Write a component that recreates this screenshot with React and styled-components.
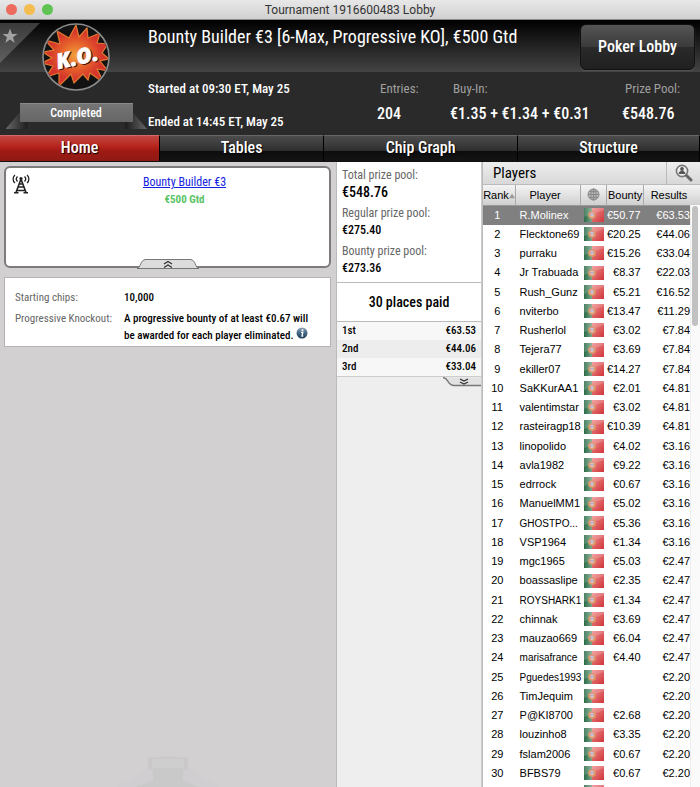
import React from "react";
import styled, { createGlobalStyle } from "styled-components";

const tabs = [
  { label: "Home", size: 160, active: true },
  { label: "Tables", size: 164 },
  { label: "Chip Graph", size: 194 },
  { label: "Structure", size: 182 },
];

const pools = [
  { label: "Total prize pool:", value: "€548.76", big: true },
  { label: "Regular prize pool:", value: "€275.40" },
  { label: "Bounty prize pool:", value: "€273.36" },
];

const payouts = [
  ["1st", "€63.53"],
  ["2nd", "€44.06"],
  ["3rd", "€33.04"],
];

// name, bounty, result
const players = [
  ["R.Molinex", "€50.77", "€63.53"],
  ["Flecktone69", "€20.25", "€44.06"],
  ["purraku", "€15.26", "€33.04"],
  ["Jr Trabuada", "€8.37", "€22.03"],
  ["Rush_Gunz", "€5.21", "€16.52"],
  ["nviterbo", "€13.47", "€11.29"],
  ["Rusherlol", "€3.02", "€7.84"],
  ["Tejera77", "€3.69", "€7.84"],
  ["ekiller07", "€14.27", "€7.84"],
  ["SaKKurAA1", "€2.01", "€4.81"],
  ["valentimstar", "€3.02", "€4.81"],
  ["rasteiragp18", "€10.39", "€4.81"],
  ["linopolido", "€4.02", "€3.16"],
  ["avla1982", "€9.22", "€3.16"],
  ["edrrock", "€0.67", "€3.16"],
  ["ManuelMM1", "€5.02", "€3.16"],
  ["GHOSTPO...", "€5.36", "€3.16"],
  ["VSP1964", "€1.34", "€3.16"],
  ["mgc1965", "€5.03", "€2.47"],
  ["boassaslipe", "€2.35", "€2.47"],
  ["ROYSHARK1", "€1.34", "€2.47"],
  ["chinnak", "€3.69", "€2.47"],
  ["mauzao669", "€6.04", "€2.47"],
  ["marisafrance", "€4.40", "€2.47"],
  ["Pguedes1993", "", "€2.20"],
  ["TimJequim", "", "€2.20"],
  ["P@KI8700", "€2.68", "€2.20"],
  ["louzinho8", "€3.35", "€2.20"],
  ["fslam2006", "€0.67", "€2.20"],
  ["BFBS79", "€0.67", "€2.20"],
];

const wideNames = ["GHOSTPO...", "ROYSHARK1", "marisafrance", "Pguedes1993"];

const KoLogo = () => (
  <svg width="68" height="68" viewBox="0 0 68 68">
    <defs>
      <radialGradient id="blast">
        <stop offset="0" stopColor="#f3a13c" />
        <stop offset="0.45" stopColor="#e5602b" />
        <stop offset="0.8" stopColor="#d5352b" />
      </radialGradient>
      <clipPath id="disc">
        <circle cx="34" cy="34" r="32" />
      </clipPath>
    </defs>
    <circle cx="34" cy="34" r="33" fill="#121212" stroke="#8c8c8c" strokeWidth="1.6" />
    <path
      clipPath="url(#disc)"
      fill="url(#blast)"
      stroke="#e07a30"
      strokeWidth="1.2"
      d="M15 8 L27 15 L34 2 L37 14 L45 5 L46 15 L58 10 L55 20 L66 21 L60 30 L67 36 L58 38 L66 48 L55 46 L62 60 L48 50 L46 57 L41 51 L32 60 L29 51 L17 63 L17 50 L4 54 L11 43 L0 40 L10 35 L1 29 L12 27 L3 17 L18 21 Z"
    />
    <g
      transform="rotate(-13 34 34)"
      fontFamily="Open Sans, sans-serif"
      fontSize="21"
      fontWeight="800"
      fontStyle="italic"
      textAnchor="middle"
      strokeWidth="0.7"
    >
      <text x="36" y="43" fill="#3a0d08" stroke="#3a0d08" aria-hidden="true">K.O.</text>
      <text x="35" y="42" fill="#fff" stroke="#fff">K.O.</text>
    </g>
  </svg>
);

const Flag = () => (
  <svg width="20" height="14" viewBox="0 0 20 14">
    <defs>
      <linearGradient id="green" x2="1" y2="0">
        <stop offset="0" stopColor="#276a44" />
        <stop offset="1" stopColor="#7fa58b" />
      </linearGradient>
      <linearGradient id="red" x2="1" y2="1">
        <stop offset="0" stopColor="#f08f90" />
        <stop offset="1" stopColor="#cf3438" />
      </linearGradient>
    </defs>
    <rect width="8" height="14" fill="url(#green)" />
    <rect x="8" width="12" height="14" fill="url(#red)" />
    <path d="M0 0h20v2L0 9z" fill="#fff" opacity="0.16" />
    <circle cx="8" cy="7" r="3.8" fill="#dfa06a" />
    <path d="M6.2 4.6h3.6v3.2L8 9.6 6.2 7.8z" fill="#e9e2ea" stroke="#d07070" strokeWidth="0.6" />
    <rect x="7.4" y="5.8" width="1.2" height="1.6" fill="#7382b4" />
  </svg>
);

const Antenna = () => (
  <svg width="18" height="21" viewBox="0 0 18 21" fill="none" stroke="#222" strokeWidth="1.3">
    <path d="M3 1C0.5 3 0.5 7 3 9M15 1C17.5 3 17.5 7 15 9M5.5 2.5C4 4 4 6 5.5 7.5M12.5 2.5C14 4 14 6 12.5 7.5" />
    <circle cx="9" cy="4.5" r="1.6" fill="#222" stroke="none" />
    <path d="M9 5L4 18.5M9 5L14 18.500M7.5 10H10.5M6.5 13H11.5M5 16.5H13" strokeWidth="1.6" />
    <path d="M2 18.7H6.5M11.5 18.7H16" strokeWidth="1.6" />
  </svg>
);

const Globe = () => (
  <svg width="13" height="13" viewBox="0 0 13 13" fill="#bbb" stroke="#888">
    <circle cx="6.5" cy="6.5" r="5.5" />
    <ellipse cx="6.5" cy="6.5" rx="2.6" ry="5.5" fill="none" />
    <path d="M1 6.5H12M6.5 1V12M2 3.7H11M2 9.3H11" />
  </svg>
);

const SearchIcon = () => (
  <svg width="18" height="18" viewBox="0 0 18 18">
    <circle cx="7" cy="7" r="5.6" fill="#eee" stroke="#777" strokeWidth="1.6" />
    <circle cx="7" cy="5" r="1.9" fill="#555" />
    <path d="M3.6 10C3.6 7.5 5.5 7 7 7S10.4 7.5 10.4 10Z" fill="#555" />
    <path d="M11.5 11.5L16 16" stroke="#666" strokeWidth="3" strokeLinecap="round" />
  </svg>
);

const InfoIcon = () => (
  <svg width="12" height="12" viewBox="0 0 12 12">
    <defs>
      <linearGradient id="ball" x2="0" y2="1">
        <stop offset="0" stopColor="#8fa6ba" />
        <stop offset="0.5" stopColor="#456886" />
        <stop offset="1" stopColor="#1b3a58" />
      </linearGradient>
    </defs>
    <circle cx="6" cy="6" r="5.5" fill="url(#ball)" />
    <circle cx="6.5" cy="3.2" r="1" fill="#fff" />
    <path d="M5 5.3H6.8L6 9H7.2" fill="none" stroke="#fff" strokeWidth="1.3" />
  </svg>
);

const UpHandle = () => (
  <svg width="62" height="10" viewBox="0 0 62 10">
    <path d="M0 9.5C4 9 3 0.5 9 0.5H53C59 0.5 58 9 62 9.5Z" fill="#dcdcdc" stroke="#777" />
    <path d="M27 5L31 2.5L35 5M27 8.5L31 6L35 8.5" fill="none" stroke="#333" strokeWidth="1.3" />
  </svg>
);

const DownHandle = () => (
  <svg width="38" height="10" viewBox="0 0 38 10">
    <path d="M0 0.5C6 1 4 8.5 11 8.5H38V0.5Z" fill="#e2e2e2" />
    <path d="M0 0.5C6 1 4 8.5 11 8.5H38" fill="none" stroke="#777" strokeWidth="1.3" />
    <path d="M17 2L21 4L25 2M17 5L21 7L25 5" fill="none" stroke="#333" strokeWidth="1.3" />
  </svg>
);

const App = () => {
  return (
    <>
      <GlobalStyle />
      <Window>
        <TitleBar>
          <Lights>
            <Light color="#ee6a5f" />
            <Light color="#f5bd4f" />
            <Light color="#5fc454" />
          </Lights>
          <WindowTitle>Tournament 1916600483 Lobby</WindowTitle>
        </TitleBar>

        <Header>
          <Corner aria-label="Favourite">
            <svg width="16" height="16" viewBox="0 0 16 16" fill="#a2a2a2">
              <path d="M8 0.5L10 6H15.5L11 9.3L12.7 15L8 11.5L3.3 15L5 9.3L0.5 6H6Z" />
            </svg>
          </Corner>
          <Badge>
            <KoLogo />
            <Ribbon>
              <RibbonText>Completed</RibbonText>
            </Ribbon>
          </Badge>
          <HeaderMain>
            <TopRow>
              <Name>Bounty Builder €3 [6-Max, Progressive KO], €500 Gtd</Name>
              <LobbyBtn>Poker Lobby</LobbyBtn>
            </TopRow>
            <InfoRow>
              <Times>
                <span>Started at 09:30 ET, May 25</span>
                <span>Ended at 14:45 ET, May 25</span>
              </Times>
              <Stat>
                <StatLabel>Entries:</StatLabel>
                <StatValue>204</StatValue>
              </Stat>
              <Stat>
                <StatLabel>Buy-In:</StatLabel>
                <StatValue>€1.35 + €1.34 + €0.31</StatValue>
              </Stat>
              <Stat>
                <StatLabel>Prize Pool:</StatLabel>
                <StatValue>€548.76</StatValue>
              </Stat>
            </InfoRow>
          </HeaderMain>
        </Header>

        <Tabs>
          {tabs.map((tab) => (
            <Tab key={tab.label} $size={tab.size} $active={tab.active}>
              {tab.label}
            </Tab>
          ))}
        </Tabs>

        <Content>
          {/* Series and details */}
          <Details>
            <SeriesCard>
              <Antenna />
              <SeriesText>
                <SeriesLink href="#series">Bounty Builder €3</SeriesLink>
                <Guarantee>€500 Gtd</Guarantee>
              </SeriesText>
              <CollapseBtn aria-label="Collapse">
                <UpHandle />
              </CollapseBtn>
            </SeriesCard>
            <InfoCard>
              <dt>Starting chips:</dt>
              <dd>10,000</dd>
              <dt>Progressive Knockout:</dt>
              <dd>
                A progressive bounty of at least €0.67 will be awarded for each player eliminated.{" "}
                <InfoIcon />
              </dd>
            </InfoCard>
            <Watermark>
              <svg width="100" height="31" viewBox="0 0 100 31">
                <path d="M0 31L30 12H72L100 31Z" fill="#d0ced0" />
                <path d="M30 2Q50 -1 70 2V14H65V24L80 31H18L35 24V14H30Z" fill="#cac9ca" />
                <path d="M34 3H66V12H34Z" fill="#cfcecf" />
              </svg>
            </Watermark>
          </Details>

          {/* Prizes */}
          <Prizes>
            <Pools>
              {pools.map((pool) => (
                <Pool key={pool.label}>
                  <PoolLabel>{pool.label}</PoolLabel>
                  <PoolValue $big={pool.big}>{pool.value}</PoolValue>
                </Pool>
              ))}
            </Pools>
            <Places>30 places paid</Places>
            <PayoutTable>
              <tbody>
                {payouts.map(([place, prize]) => (
                  <tr key={place}>
                    <td>{place}</td>
                    <td>{prize}</td>
                  </tr>
                ))}
              </tbody>
            </PayoutTable>
            <ExpandBtn aria-label="Show all payouts">
              <DownHandle />
            </ExpandBtn>
          </Prizes>

          {/* Players */}
          <Players>
            <PlayersBar>
              <PlayersTitle>Players</PlayersTitle>
              <FindBtn aria-label="Find a player">
                <SearchIcon />
              </FindBtn>
            </PlayersBar>
            <PlayerTable>
              <colgroup>
                <col style={{ width: "15%" }} />
                <col style={{ width: "30%" }} />
                <col style={{ width: "12%" }} />
                <col style={{ width: "17%" }} />
                <col />
              </colgroup>
              <thead>
                <tr>
                  <th>
                    Rank
                    <SortMark viewBox="0 0 8 6">
                      <path d="M0 6L4 0L8 6Z" fill="#999" />
                    </SortMark>
                  </th>
                  <th>Player</th>
                  <th aria-label="Country">
                    <Globe />
                  </th>
                  <th>Bounty</th>
                  <th>Results</th>
                </tr>
              </thead>
              <tbody>
                {players.map(([name, bounty, result], i) => (
                  <PlayerRow key={name} $selected={i === 0}>
                    <td>{i + 1}</td>
                    <NameCell $wide={wideNames.includes(name)}>{name}</NameCell>
                    <td>
                      <Flag />
                    </td>
                    <td>{bounty}</td>
                    <td>{result}</td>
                  </PlayerRow>
                ))}
                <PlayerRow>
                  <td />
                  <td />
                  <td>
                    <Flag />
                  </td>
                  <td />
                  <td />
                </PlayerRow>
              </tbody>
            </PlayerTable>
            <ScrollTrack>
              <ScrollThumb />
            </ScrollTrack>
          </Players>
        </Content>
      </Window>
    </>
  );
};

const condensed = `"Roboto Condensed", Roboto, sans-serif`;

const GlobalStyle = createGlobalStyle`
  * {
    box-sizing: border-box;
  }
  body {
    margin: 0;
    background: #d2d0d1;
  }
  button {
    padding: 0;
    border: none;
    background: none;
    cursor: pointer;
  }
  svg {
    display: block;
  }
`;
const Window = styled.div`
  display: flex;
  flex-direction: column;
  height: 100vh;
  font-family: ${condensed};
  overflow: hidden;
`;
const TitleBar = styled.div`
  display: grid;
  grid-template-columns: 1fr auto 1fr;
  align-items: center;
  flex: none;
  height: 20px;
  padding: 0 6px;
  background: linear-gradient(#e8e8e8, #d0d0d0);
  border-bottom: 1px solid #8a8a8a;
`;
const Lights = styled.div`
  display: flex;
  gap: 7px;
`;
const Light = styled.span`
  width: 11px;
  height: 11px;
  border-radius: 50%;
  background: ${(props) => props.color};
`;
const WindowTitle = styled.span`
  font: 12px/18px Roboto, sans-serif;
  color: #333;
`;
const Header = styled.header`
  position: relative;
  display: flex;
  flex: none;
  height: 115px;
  background: linear-gradient(#000, #444 52px, #2a2a2a 52px);
`;
const Corner = styled.button`
  position: absolute;
  top: 3px;
  left: 0;
  width: 40px;
  height: 40px;
  padding: 5px 2px 19px;
  background: linear-gradient(#3a3a3a, #606060);
  clip-path: polygon(0 0, 100% 0, 0 100%);
`;
const Badge = styled.div`
  display: flex;
  flex-direction: column;
  align-items: center;
  gap: 12px;
  width: 148px;
  padding: 3px 0 0 4px;
`;
const Ribbon = styled.div`
  position: relative;
  width: 113px;

  &::before,
  &::after {
    content: "";
    position: absolute;
    top: 8px;
    width: 22px;
    height: 18px;
    background: linear-gradient(90deg, #666, #1c1c1c);
    clip-path: polygon(70% 0, 100% 0, 100% 100%, 0 100%);
  }
  &::before {
    left: -14px;
  }
  &::after {
    right: -14px;
    transform: scaleX(-1);
  }
`;
const RibbonText = styled.div`
  position: relative;
  z-index: 1;
  background: linear-gradient(#757575, #666);
  border-top: 1px solid #8a8a8a;
  font-size: 12px;
  font-weight: 500;
  line-height: 18px;
  text-align: center;
  color: #fff;
`;
const HeaderMain = styled.div`
  display: flex;
  flex-direction: column;
  flex: 1;
  min-width: 0;
`;
const TopRow = styled.div`
  display: flex;
  justify-content: space-between;
  height: 52px;
  padding: 4px 5px 0 0;
`;
const Name = styled.h1`
  margin: 0;
  font-size: 18px;
  font-weight: 400;
  line-height: 26px;
  white-space: nowrap;
  color: #fff;
`;
const LobbyBtn = styled.button`
  width: 115px;
  height: 46px;
  padding-bottom: 2px;
  border: 1px solid #111;
  border-radius: 6px;
  background: linear-gradient(#555, #3a3a3a 50%, #2a2a2a 50%, #202020);
  box-shadow: 0 1px 1px #555;
  font: 500 16px ${condensed};
  color: #fff;
`;
const InfoRow = styled.div`
  display: grid;
  grid-template-columns: 229fr 73fr 172fr 78fr;
  flex: 1;
`;
const Times = styled.div`
  display: flex;
  flex-direction: column;
  justify-content: space-between;
  padding: 8px 0 4px;
  font-size: 13px;
  font-weight: 500;
  line-height: 18px;
  color: #fff;
`;
const Stat = styled.div`
  display: flex;
  flex-direction: column;
  gap: 6px;
  padding-top: 8px;
  white-space: nowrap;
`;
const StatLabel = styled.span`
  padding-left: 3px;
  font-size: 13px;
  line-height: 18px;
  color: #a0a0a0;
`;
const StatValue = styled.span`
  font-size: 16px;
  font-weight: 500;
  line-height: 20px;
  color: #fff;
`;
const Tabs = styled.nav`
  display: flex;
  flex: none;
  height: 27px;
  border-bottom: 1px solid #111;
`;
const Tab = styled.button`
  flex: ${(props) => props.$size} 1 0;
  padding-bottom: 2px;
  border-top: 1px solid ${(props) => (props.$active ? "#cf6a66" : "#666")};
  border-right: 1px solid #000;
  background: ${(props) =>
    props.$active
      ? "linear-gradient(#c04844, #b8251e 40%, #a01a14 60%, #8e1a14)"
      : "linear-gradient(#4c4c4c, #2e2e2e 60%, #0c0c0c 60%, #141414)"};
  font: 500 16px ${condensed};
  color: #fff;
  text-shadow: 1px 1px 1px #000;
`;
const Content = styled.main`
  display: grid;
  grid-template-columns: 336fr 146fr 218fr;
  flex: 1;
  min-height: 0;
`;
const Details = styled.section`
  display: flex;
  flex-direction: column;
  gap: 9px;
  padding: 4px 5px 0 4px;
  background: #d2d0d1;
`;
const SeriesCard = styled.div`
  position: relative;
  display: flex;
  flex: none;
  height: 102px;
  padding: 6px;
  background: #fff;
  border: 2px solid #7c7c7c;
  border-radius: 6px;
`;
const SeriesText = styled.div`
  display: flex;
  flex-direction: column;
  align-items: center;
  flex: 1;
  padding-left: 16px;
  font-size: 12px;
  line-height: 17px;
`;
const SeriesLink = styled.a`
  color: #1423e0;
`;
const Guarantee = styled.strong`
  font-size: 11px;
  color: #5ac465;
`;
const CollapseBtn = styled.button`
  position: absolute;
  bottom: -3px;
  left: calc(50% - 31px);
`;
const InfoCard = styled.dl`
  display: grid;
  grid-template-columns: 109px 1fr;
  row-gap: 4px;
  margin: 0;
  padding: 11px 10px 2px;
  background: #fff;
  border: 1px solid #b4b4b4;
  font-size: 11px;
  line-height: 17px;

  dt {
    color: #666;
  }
  dd {
    margin: 0;
    font-weight: 500;
    color: #000;
  }
  svg {
    display: inline-block;
  }
`;
const Watermark = styled.div`
  display: flex;
  justify-content: center;
  margin-top: auto;
`;
const Prizes = styled.section`
  display: flex;
  flex-direction: column;
  background: #eee;
  border-right: 1px solid #ccc;
  border-left: 1px solid #bbb;
`;
const Pools = styled.div`
  display: flex;
  flex-direction: column;
  gap: 4px;
  padding: 5px 5px 5px;
  background: #fff;
  border-bottom: 1px solid #bbb;
`;
const Pool = styled.div`
  display: flex;
  flex-direction: column;
`;
const PoolLabel = styled.span`
  font-size: 12px;
  line-height: 17px;
  color: #666;
`;
const PoolValue = styled.span`
  font-size: ${(props) => (props.$big ? "14px" : "12px")};
  font-weight: 500;
  line-height: 17px;
  color: #000;
`;
const Places = styled.h2`
  margin: 0;
  background: #fff;
  border-bottom: 1px solid #bbb;
  font-size: 14px;
  font-weight: 500;
  line-height: 38px;
  text-align: center;
`;
const PayoutTable = styled.table`
  width: 100%;
  border-collapse: collapse;
  border-bottom: 1px solid #ccc;
  font-size: 11px;
  font-weight: 500;
  line-height: 18px;

  td {
    padding: 0 5px;
    background: #f7f7f7;
  }
  tr:nth-child(2) td {
    background: #ededed;
  }
  td:last-child {
    text-align: right;
  }
`;
const ExpandBtn = styled.button`
  align-self: flex-end;
`;
const Players = styled.section`
  position: relative;
  background: #fff;
  border-left: 1px solid #bbb;
  overflow: hidden;
`;
const PlayersBar = styled.div`
  display: flex;
  justify-content: space-between;
  height: 23px;
  background: linear-gradient(#eee, #d8d8d8);
  border-bottom: 1px solid #bbb;
`;
const PlayersTitle = styled.h2`
  margin: 0;
  padding-left: 10px;
  font-size: 15px;
  font-weight: 400;
  line-height: 22px;
`;
const FindBtn = styled.button`
  display: flex;
  align-items: center;
  justify-content: center;
  width: 34px;
  border-left: 1px solid #bbb;
`;
const PlayerTable = styled.table`
  table-layout: fixed;
  width: 100%;
  border-collapse: collapse;
  font: 11px/19px "Liberation Sans", Arial, sans-serif;
  color: #000;

  th {
    height: 20px;
    padding: 0;
    background: linear-gradient(#f4f4f4, #cfcfcf);
    border-right: 1px solid #aaa;
    border-bottom: 1px solid #999;
    font-weight: 400;
    line-height: 18px;
    white-space: nowrap;
  }
  th:nth-child(2),
  th:last-child {
    padding-right: 6px;
  }
  th:last-child {
    border-right: none;
  }
  th svg {
    margin: 0 auto;
  }
`;
const SortMark = styled.svg`
  && {
    display: inline-block;
    width: 6px;
    height: 6px;
  }
`;
const PlayerRow = styled.tr`
  height: 19px;
  background: ${(props) => (props.$selected ? "#808080" : "#fff")};
  color: ${(props) => (props.$selected ? "#fff" : "#000")};

  &:nth-child(4n) {
    height: 20px;
  }
  td {
    padding: 0;
    white-space: nowrap;
  }
  td:first-child {
    padding-right: 4px;
    text-align: center;
  }
  td:nth-child(n + 4) {
    padding-right: 3px;
    text-align: right;
  }
  td:last-child {
    padding-right: 10px;
  }
  svg {
    margin: 0 auto;
  }
`;
const NameCell = styled.td`
  font-size: ${(props) => (props.$wide ? "10px" : "11px")};

  && {
    padding-left: 4px;
  }
`;
const ScrollTrack = styled.div`
  position: absolute;
  top: 43px;
  right: 0;
  bottom: 0;
  width: 10px;
  background: #fafafa;
  border-left: 1px solid #eee;
`;
const ScrollThumb = styled.div`
  width: 6px;
  height: 120px;
  margin: 1px 1px 0;
  background: #c1c1c1;
  border-radius: 3px;
`;

export default App;
